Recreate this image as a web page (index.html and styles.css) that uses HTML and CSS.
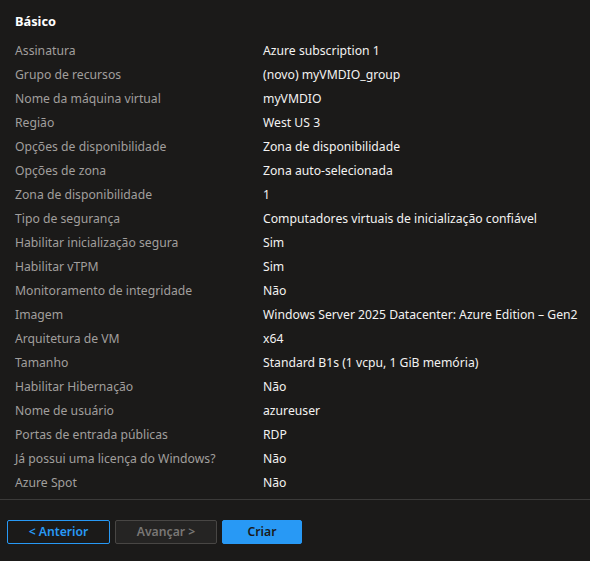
FILE: index.html
```html
<!DOCTYPE html>
<html lang="pt">
<head>
<meta charset="utf-8">
<link rel="stylesheet" href="styles.css">
</head>
<body>
<div class="page">
  <div class="content">
    <h2 class="title">Básico</h2>
    <dl class="grid">
      <dt>Assinatura</dt><dd>Azure subscription 1</dd>
      <dt>Grupo de recursos</dt><dd>(novo) myVMDIO_group</dd>
      <dt>Nome da máquina virtual</dt><dd>myVMDIO</dd>
      <dt>Região</dt><dd>West US 3</dd>
      <dt>Opções de disponibilidade</dt><dd>Zona de disponibilidade</dd>
      <dt>Opções de zona</dt><dd>Zona auto-selecionada</dd>
      <dt>Zona de disponibilidade</dt><dd>1</dd>
      <dt>Tipo de segurança</dt><dd>Computadores virtuais de inicialização confiável</dd>
      <dt>Habilitar inicialização segura</dt><dd>Sim</dd>
      <dt>Habilitar vTPM</dt><dd>Sim</dd>
      <dt>Monitoramento de integridade</dt><dd>Não</dd>
      <dt>Imagem</dt><dd>Windows Server 2025 Datacenter: Azure Edition – Gen2</dd>
      <dt>Arquitetura de VM</dt><dd>x64</dd>
      <dt>Tamanho</dt><dd>Standard B1s (1 vcpu, 1 GiB memória)</dd>
      <dt>Habilitar Hibernação</dt><dd>Não</dd>
      <dt>Nome de usuário</dt><dd>azureuser</dd>
      <dt>Portas de entrada públicas</dt><dd>RDP</dd>
      <dt>Já possui uma licença do Windows?</dt><dd>Não</dd>
      <dt>Azure Spot</dt><dd>Não</dd>
    </dl>
  </div>
  <div class="footer">
    <button class="btn btn-outline">&lt; Anterior</button>
    <button class="btn btn-disabled">Avançar &gt;</button>
    <button class="btn btn-primary">Criar</button>
  </div>
</div>
</body>
</html>
```
FILE: styles.css
```css
html, body {
  margin: 0;
  padding: 0;
  background: #1b1a19;
}
body {
  font-family: "Noto Sans", "Open Sans", sans-serif;
  font-size: 12.2px;
  color: #f3f2f1;
  height: 561px;
  overflow: hidden;
}
.content {
  padding: 11px 0 5px 15px;
  border-bottom: 1px solid #3b3a39;
}
.title {
  margin: 0 0 7px 0;
  font-size: 12.8px;
  font-weight: 700;
  line-height: 20px;
  color: #ffffff;
}
.grid {
  margin: 0;
  display: grid;
  grid-template-columns: 248px 1fr;
  grid-auto-rows: 24px;
  align-items: center;
}
.grid dt {
  color: #a19f9d;
  white-space: nowrap;
}
.grid dd {
  margin: 0;
  color: #f3f2f1;
  white-space: nowrap;
}
.footer {
  display: flex;
  gap: 5px;
  padding: 20px 0 0 7px;
}
.btn {
  height: 24px;
  box-sizing: border-box;
  font-family: inherit;
  font-size: 12.2px;
  font-weight: 600;
  border-radius: 2px;
  padding: 0;
  line-height: 20px;
}
.btn-outline {
  width: 103px;
  background: #1b1a19;
  border: 1px solid #2899f5;
  color: #2899f5;
}
.btn-disabled {
  width: 102px;
  background: #252423;
  border: 1px solid #484644;
  color: #797775;
}
.btn-primary {
  width: 80px;
  background: #2899f5;
  border: 1px solid #2899f5;
  color: #1b1a19;
}
```
